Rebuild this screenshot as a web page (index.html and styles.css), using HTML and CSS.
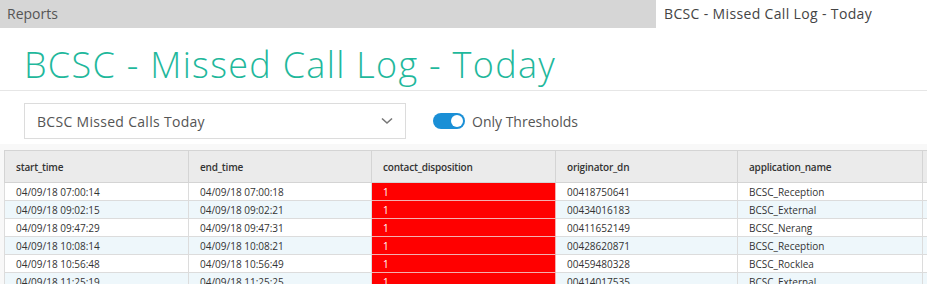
FILE: index.html
```html
<!DOCTYPE html>
<html lang="en">

<head>
    <meta charset="UTF-8">
    <title>BCSC - Missed Call Log - Today</title>
    <link rel="stylesheet" href="styles.css">
</head>

<body>
    <div id="tabs">
        <div class="tab_crumb">Reports</div>
        <div class="tab_active">BCSC - Missed Call Log - Today</div>
    </div>

    <h1 id="title">BCSC - Missed Call Log - Today</h1>

    <div id="toolbar">
        <div class="select">
            <span>BCSC Missed Calls Today</span>
            <svg width="12" height="8" viewBox="0 0 12 8">
                <path d="M1 1.5 L6 6 L11 1.5" fill="none" stroke="#777" stroke-width="1.6" />
            </svg>
        </div>
        <div class="switch">
            <span class="switch_track"><span class="switch_knob"></span></span>
            <span class="switch_label">Only Thresholds</span>
        </div>
    </div>

    <div id="grid_wrap">
        <table id="grid">
            <colgroup>
                <col style="width:184px">
                <col style="width:183px">
                <col style="width:184px">
                <col style="width:182px">
                <col style="width:185px">
                <col style="width:120px">
            </colgroup>
            <thead>
                <tr>
                    <th>start_time</th>
                    <th>end_time</th>
                    <th>contact_disposition</th>
                    <th>originator_dn</th>
                    <th>application_name</th>
                    <th></th>
                </tr>
            </thead>
            <tbody>
                <tr>
                    <td>04/09/18 07:00:14</td>
                    <td>04/09/18 07:00:18</td>
                    <td class="alarm">1</td>
                    <td>00418750641</td>
                    <td>BCSC_Reception</td>
                    <td></td>
                </tr>
                <tr>
                    <td>04/09/18 09:02:15</td>
                    <td>04/09/18 09:02:21</td>
                    <td class="alarm">1</td>
                    <td>00434016183</td>
                    <td>BCSC_External</td>
                    <td></td>
                </tr>
                <tr>
                    <td>04/09/18 09:47:29</td>
                    <td>04/09/18 09:47:31</td>
                    <td class="alarm">1</td>
                    <td>00411652149</td>
                    <td>BCSC_Nerang</td>
                    <td></td>
                </tr>
                <tr>
                    <td>04/09/18 10:08:14</td>
                    <td>04/09/18 10:08:21</td>
                    <td class="alarm">1</td>
                    <td>00428620871</td>
                    <td>BCSC_Reception</td>
                    <td></td>
                </tr>
                <tr>
                    <td>04/09/18 10:56:48</td>
                    <td>04/09/18 10:56:49</td>
                    <td class="alarm">1</td>
                    <td>00459480328</td>
                    <td>BCSC_Rocklea</td>
                    <td></td>
                </tr>
                <tr>
                    <td>04/09/18 11:25:19</td>
                    <td>04/09/18 11:25:25</td>
                    <td class="alarm">1</td>
                    <td>00414017535</td>
                    <td>BCSC_External</td>
                    <td></td>
                </tr>
            </tbody>
        </table>
    </div>
</body>

</html>
```

FILE: styles.css
```css
html, body {
    margin: 0;
    padding: 0;
    overflow: hidden;
    background: #fff;
    font-family: "Open Sans", "Liberation Sans", sans-serif;
    color: #555;
}

#tabs {
    display: flex;
    height: 28px;
}

.tab_crumb {
    width: 649px;
    background: #d6d6d6;
    padding-left: 7px;
    font-size: 14px;
    line-height: 28px;
    color: #555;
}

.tab_active {
    flex: 1;
    padding-left: 8px;
    font-size: 14px;
    letter-spacing: 0.35px;
    line-height: 28px;
    color: #444;
}

#title {
    margin: 0;
    padding: 14px 0 0 24px;
    height: 48px;
    font-size: 36px;
    font-weight: 300;
    letter-spacing: 1.3px;
    line-height: 46px;
    color: #1fb89c;
    border-bottom: 1px solid #e6e6e6;
}

#toolbar {
    display: flex;
    align-items: center;
    padding: 12px 0 0 24px;
    height: 36px;
}

.select {
    width: 356px;
    height: 34px;
    border: 1px solid #dcdcdc;
    display: flex;
    align-items: center;
    justify-content: space-between;
    padding: 0 12px;
    font-size: 14px;
    letter-spacing: 0.3px;
    color: #555;
}

.switch {
    display: flex;
    align-items: center;
    margin-left: 27px;
}

.switch_track {
    width: 32px;
    height: 16px;
    border-radius: 8px;
    background: #1a8fd6;
    position: relative;
}

.switch_knob {
    position: absolute;
    right: 2px;
    top: 2px;
    width: 12px;
    height: 12px;
    border-radius: 6px;
    background: #fff;
}

.switch_label {
    margin-left: 7px;
    font-size: 14px;
    color: #555;
}

#grid_wrap {
    margin-top: 5px;
    padding: 6px 0 0 4px;
    background: #f8f8f8;
}

#grid {
    border-collapse: collapse;
    table-layout: fixed;
    width: 1038px;
    font-size: 10px;
}

#grid th {
    height: 31px;
    background: #ebebeb;
    border: 1px solid #d4d4d4;
    text-align: left;
    padding: 0 0 0 11px;
    font-weight: 600;
    color: #333;
    letter-spacing: -0.2px;
}

#grid td {
    height: 17px;
    border: 1px solid #dcdcdc;
    padding: 0 0 0 11px;
    color: #333;
    background: #fff;
    white-space: nowrap;
}

#grid tbody tr:nth-child(even) td {
    background: #eef7fb;
}

#grid tbody tr td.alarm {
    background: #ff0000;
    color: #fff;
    border-color: #f3b0b0;
}
```
